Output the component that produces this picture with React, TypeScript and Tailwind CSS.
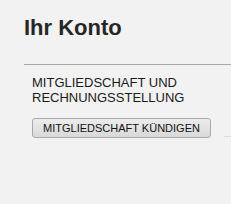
export default function App() {
  return (
    <div
      className="min-h-[204px] w-full bg-[#f2f2f2] pl-[24px] pt-[16px] text-[#222]"
      style={{ fontFamily: '"Liberation Sans", Arial, sans-serif' }}
    >
      <h1 className="text-[22px] font-bold leading-[24px] text-[#262626]">Ihr Konto</h1>

      <div className="mt-[24px] border-t border-[#a8a8a8] pl-[8px] pt-[10px]">
        <h2 className="text-[13px] leading-[15px] text-[#1a1a1a]">
          MITGLIEDSCHAFT UND
          <br />
          RECHNUNGSSTELLUNG
        </h2>

        <div className="mt-[13px] flex items-end">
          <button className="h-[20px] w-[179px] rounded-[3px] border border-[#a9a9a9] bg-gradient-to-b from-[#ececec] to-[#d9d9d9] text-[11px] leading-[18px] text-[#111]">
            MITGLIEDSCHAFT KÜNDIGEN
          </button>
          <div className="mb-[1px] ml-[13px] flex-1 border-b border-[#dcdcdc]" />
        </div>
      </div>
    </div>
  );
}
